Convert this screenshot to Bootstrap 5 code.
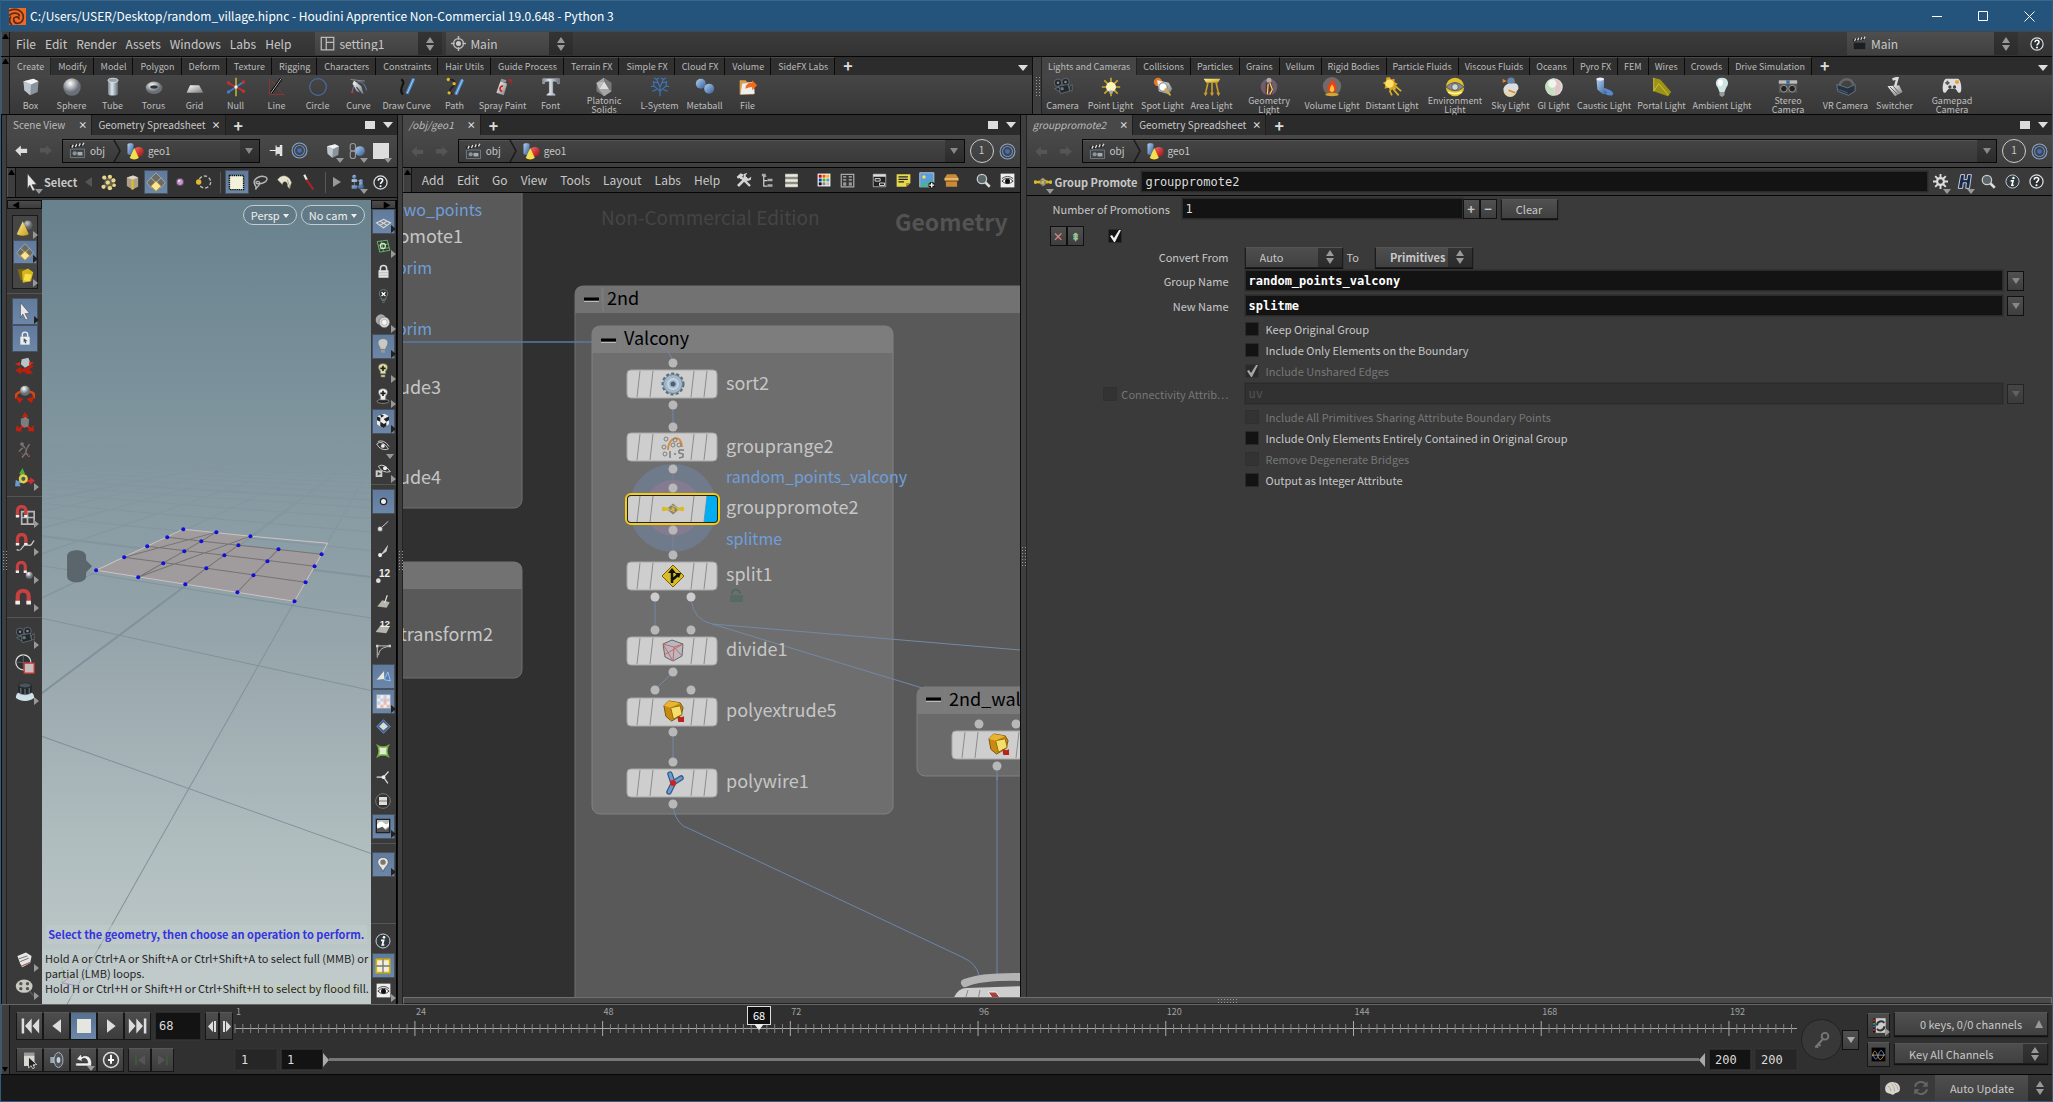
<!DOCTYPE html>
<html lang="en">
<head>
<meta charset="utf-8">
<meta name="viewport" content="width=device-width, initial-scale=1">
<title>random_village.hipnc - Houdini Apprentice</title>
<link rel="stylesheet" href="https://cdn.jsdelivr.net/npm/bootstrap@5.3.0/dist/css/bootstrap.min.css">
<style>
:root{--ui:"Noto Sans CJK SC","Noto Sans",sans-serif;--mono:"DejaVu Sans Mono","Liberation Mono",monospace}
body{background:#3a3a3a;color:#c8c8c8;font:11px/14px var(--ui);border:1px solid #2f5d80;border-top:0}
button,input,select{font:inherit;color:inherit;margin:0}
button{background:none;border:0;padding:0}
a{color:inherit;text-decoration:none}
svg{display:block;flex:none}
.ic{width:20px;height:20px}
.titlebar{height:31px;background:#24547b;border-top:1px solid #3a678a;color:#fff;font-size:12px;padding-left:8px}
.winbtn{width:46px;height:30px;display:grid;place-items:center}
.menubar{height:25px;background:linear-gradient(#3c3c3c,#333);font-size:12px;border-top:1px solid #474747}
.grip{width:9px;flex:none;background:#3e3e3e;border-right:1px solid #111;border-left:1px solid #555}
.grip::before{content:"";display:block;border:3px solid transparent;border-bottom:5px solid #000;border-top:0;margin-top:2px}
.grip.down{display:flex;align-items:end}
.grip.down::before{border-top:5px solid #000;border-bottom:0;margin-bottom:2px}
.menus{gap:9px;padding-left:6px}
.desk{position:relative;height:23px;background:linear-gradient(#4d4d4d,#404040)}
.desk svg{position:absolute;left:5px;top:4px;width:15px;height:15px;pointer-events:none}
.combo{appearance:none;border:0;border-radius:0;width:100%;height:100%;padding:0 26px 0 24px;background:url("data:image/svg+xml,%3Csvg xmlns='http://www.w3.org/2000/svg' width='8' height='14'%3E%3Cpath d='M4 0L8 6H0zM4 14L0 8h8z' fill='%23999'/%3E%3C/svg%3E") right 8px center no-repeat,linear-gradient(#343434,#2b2b2b) right/24px 100% no-repeat,linear-gradient(#4e4e4e,#404040);outline:0}
.btnish{border:1px solid #1c1c1c;border-top-color:#555;box-shadow:0 1px 1px #111}
.shelfrow{height:59px;background:#3a3a3a;border-top:1px solid #050505;border-bottom:1px solid #050505}
.shelftabs{height:18px;background:#2c2c2c;font-size:9px;line-height:17px}
.shelftabs button{padding:0 6px 0 7px;border-right:1px solid #0a0a0a;border-top:1px solid #4a4a4a;background:#303030;color:#bbb;white-space:nowrap}
.tight button{padding:0 6px}
.shelftabs button.on{background:#454545;border-right-color:#222}
.addtab{color:#ddd;font:bold 16px/17px var(--ui)}
.tools{height:39px;background:linear-gradient(#464646,#373737);font-size:9px;line-height:9px}
.tools button{width:41px;flex:none;text-align:center;display:flex;flex-direction:column;align-items:center;color:#bebebe;padding-top:2px}
.tools button span{height:18px;display:grid;place-items:center;white-space:nowrap;margin-top:-1px}
.tools .s45{width:45px}.tools .s49{width:49px}.tools .s55{width:55px}.tools .s60{width:60px}.tools .s66{width:66px}.tools .s73{width:73px}
.tri{border:5px solid transparent;border-top:6px solid #ddd;border-bottom:0;width:0;height:0;flex:none}
.vsash{width:7px;flex:none;background:#3e3e3e;border-left:1px solid #0c0c0c;border-right:1px solid #222;display:grid;place-items:center}
.vsash.slim{width:6px}
.dots{width:5px;height:20px;background:radial-gradient(circle,#999 35%,transparent 45%) 0 0/3px 3px}
.hd{height:20px;background:#2b2b2b;font-size:10px}
.hd .ptab{height:20px;padding:0 4px 0 6px;background:#2f2f2f;border-right:1px solid #1e1e1e;white-space:nowrap}
.hd .ptab.on{background:#484848;color:#bbb}
.ptab button{color:#ddd;font:bold 9px/10px var(--ui);margin-left:6px}
.ptab.on button{margin-left:13px}
.maxi{width:10px;height:8px;background:#ddd}
.pathrow{height:33px;background:linear-gradient(#484848,#3e3e3e);border-bottom:1px solid #050505;padding:0 4px 0 7px;font-size:10px;gap:5px}
.fwd{margin:0 4px}
.pathbox{height:24px;border:1px solid #080808;background:linear-gradient(#444,#3a3a3a);box-shadow:inset 0 1px #555;flex:1;padding-left:6px}
.pathbox .dd{width:19px;height:22px;background:linear-gradient(#383838,#2c2c2c);margin-left:auto;display:grid;place-items:center}
.dd .tri,.field .tri{border-width:4px;border-top:6px solid #888;border-bottom:0}
.num1{width:24px;height:24px;border:1px solid #ccc;border-radius:50%;text-align:center;line-height:20px}
.toolbar{height:30px;background:#333;border-bottom:1px solid #050505}
.toolbar.short{height:25px}
.tb{position:relative;width:24px;height:24px;display:grid;place-items:center;flex:none}
.tb.on{background:linear-gradient(#5f7a9c,#6c87a8);outline:1px solid #47525e;outline-offset:-1px}
.mk::after{content:"";position:absolute;right:-1px;bottom:1px;border:4px solid transparent;border-left:5px solid #999;border-right:0}
.mk.on::after{border-left-color:#222}
.mkd::after{content:"";position:absolute;right:1px;bottom:0;border:4px solid transparent;border-top:5px solid #999;border-bottom:0}
.leftbar{width:35px;flex:none;background:#3a3a3a;padding-bottom:3px}
.leftbar .tb{width:26px;height:28px}
.leftbar .trio{border:1px solid #1a1a1a;background:#464646;margin:6px 0 4px}
.leftbar .trio .tb{width:24px;height:24px}
.leftbar .lk{height:27px}
.rightbar{width:26px;flex:none;background:#3a3a3a;border-right:1px solid #000;padding-bottom:1px}
.rightbar .tb{height:25px;width:23px}
.hr1{height:1px;background:#555;width:100%;flex:none}
.endcap{height:9px;width:100%;background:linear-gradient(#4c4c4c,#3c3c3c);border:1px solid #111;color:#000;font-size:8px;line-height:7px}
.viewrow{padding-top:2px;min-height:0}
.view3d{background:linear-gradient(#67818d,#81969f 30%,#96a5ab 55%,#b0bdbf 80%,#c0cac9);overflow:hidden;position:relative}
.campill{position:absolute;top:5px;height:20px;border:1px solid #c3ccd0;border-radius:10px;background:#627a85;color:#eee;font-size:11px;line-height:16px;padding:0 7px}
.campill .tri{display:inline-block;border-width:3px;border-top:4px solid #eee;border-bottom:0;margin-left:3px;vertical-align:2px}
.hints{position:absolute;left:0;right:0;bottom:6px;color:#262626;font-size:11px;line-height:15px;white-space:nowrap}
.hints b{display:block;margin:0 4px 5px;padding:2px;color:#3434e0;background:#c2cccb80}
.hints p{margin:0;padding:2px 3px;background:#c2cccb80}
.net{background:#303030;overflow:hidden;flex:1;min-height:0;position:relative}
.net text{font-family:var(--ui);font-size:18px}
.netmenu{font-size:12px;gap:13px;padding-left:10px}
.parm{background:#3a3a3a;font-size:11px}
.ophead{height:28px;border-bottom:1px solid #050505}
.inp{background:#131313;border:1px solid #2b2b2b;box-shadow:0 0 0 1px #333;outline:0;height:21px;padding:0 3px;font:12px/18px var(--mono);color:#ddd;border-radius:0;min-width:0}
.inp.dim{background:#262626}
.inp:disabled{background:#313131;color:#555}
.prow{display:flex;align-items:center}
.prow.first{padding:2px 0 0 26px}
.prow.multi{padding-left:23px;margin-top:7px}
.plab{width:202px;text-align:right;flex:none;margin-right:16px}
.off{color:#777}
.cbx{appearance:none;width:14px;height:14px;background:#131313;border:1px solid #2a2a2a;border-radius:0;margin:0 7px 0 0;flex:none}
.cbx:disabled{background:#333;border-color:#303030}
.cbx:checked{background:#131313 url("data:image/svg+xml,%3Csvg xmlns='http://www.w3.org/2000/svg' viewBox='0 0 12 12'%3E%3Cpath d='M1 6l2-1 2 3 5-8 2 0-6 12H5z' fill='%23eee'/%3E%3C/svg%3E") center/12px no-repeat}
.cbx:checked:disabled{background-color:#222;opacity:.6}
.field{height:25px}
.field.conv{height:22px}
.pick{width:98px;height:21px;padding-left:14px}
.ck{height:21px}
.sq{width:17px;height:20px;background:linear-gradient(#505050,#3e3e3e);border:1px solid #111;text-align:center;font:bold 13px/16px var(--ui)}
.sq.mini{font-size:11px;line-height:14px;color:#d88}
.sq.mini.ins{color:#9c9}
.clr{width:57px;height:20px;background:linear-gradient(#505050,#404040)}
.hsash{height:8px;background:#494949;border:1px solid #707070;border-bottom-color:#222}
.hsash .dots{width:20px;height:5px}
.tline{height:71px;background:#303030;border-top:1px solid #666;border-bottom:1px solid #050505;flex:none}
.transport{width:225px;padding:7px 0 0 6px;gap:8px}
.pb{width:27px;height:28px;display:grid;place-items:center;background:linear-gradient(#4d4d4d,#3c3c3c);border:1px solid #161616;border-top-color:#585858}
.pb.on{background:linear-gradient(#56718f,#6c87a8)}
.pb.low{height:24px}
.pb.sm{width:14px}
.pb.jump{width:23px}
.pb.chan{width:23px;height:25px}
.frm{width:46px;height:28px}
.fnum{width:42px;padding-left:5px}
.slit{height:3px;background:#777;flex:1}
.playbar{min-width:0;padding-top:1px}
.ruler text{font:9px var(--ui);fill:#a2a2a2}
.now{position:absolute;top:1px;left:33.55%;margin-left:-12px;width:24px;height:19px;border:1px solid #ddd;background:#111;color:#fff;font:11px/16px var(--ui);text-align:center}
.now::after{content:"";position:absolute;left:6px;top:17px;border:5px solid transparent;border-top:6px solid #eee;border-bottom:0}
.keyc{width:41px;height:41px;border:1px solid #222;border-radius:50%;background:#383838;display:grid;place-items:center}
.chans{width:154px;padding-top:7px;gap:7px}
.status{height:26px;background:#191919;flex:none}
</style>
</head>
<body class="vh-100 d-flex flex-column overflow-hidden m-0">
<svg width="0" height="0" class="position-absolute" aria-hidden="true"><defs>
<linearGradient id="gW" x2="1" y2="1"><stop stop-color="#fff"/><stop offset="1" stop-color="#777"/></linearGradient>
<linearGradient id="gB" x2="1" y2="1"><stop stop-color="#b5d2f2"/><stop offset="1" stop-color="#315c94"/></linearGradient>
<linearGradient id="gR" x2="1" y2="1"><stop stop-color="#f66"/><stop offset="1" stop-color="#9b1212"/></linearGradient>
<linearGradient id="gY" x2="1" y2="1"><stop stop-color="#fff3a0"/><stop offset="1" stop-color="#c79a12"/></linearGradient>
<linearGradient id="gT"><stop stop-color="#78828c"/><stop offset=".4" stop-color="#dfe6ed"/><stop offset="1" stop-color="#5f6a75"/></linearGradient>
<radialGradient id="rW" cx=".4" cy=".3"><stop stop-color="#fff"/><stop offset="1" stop-color="#6a7078"/></radialGradient>
<symbol id="box" viewBox="0 0 24 24"><path d="M3 5l12-3 6 3-1 13-9 4-7-6z" fill="#8a929b"/><path d="M3 5l12-3 6 3-9 4z" fill="#f1f4f7"/><path d="M3 5l9 4-1 13-7-6z" fill="#bcc4cc"/></symbol>
<symbol id="sphere" viewBox="0 0 24 24"><circle cx="12" cy="12" r="10.500" fill="url(#rW)"/></symbol>
<symbol id="tube" viewBox="0 0 24 24"><path d="M6 4v16c0 3 12 3 12 0V4z" fill="url(#gT)"/><ellipse cx="12" cy="4" rx="6" ry="2.500" fill="#99a3ad" stroke="#dfe6ed"/></symbol>
<symbol id="torus" viewBox="0 0 24 24"><ellipse cx="12" cy="13" rx="10" ry="7.500" fill="url(#rW)"/><ellipse cx="12" cy="12" rx="4.500" ry="2" fill="#333"/></symbol>
<symbol id="grid" viewBox="0 0 24 24"><path d="M6 10h11l5 9H2z" fill="url(#gW)"/></symbol>
<symbol id="nul" viewBox="0 0 24 24"><path d="M12 1v22" stroke="#b8b02a" stroke-width="2"/><path d="M2 7l20 10" stroke="#d02c2c" stroke-width="2"/><path d="M3 18L21 6" stroke="#3f7fd0" stroke-width="2"/><circle cx="12" cy="12" r="2" fill="#eee"/><circle cx="3" cy="7" r="2" fill="#d02c2c"/><circle cx="21" cy="17" r="2" fill="#d02c2c"/><circle cx="3" cy="18" r="2" fill="#3f7fd0"/><circle cx="21" cy="6" r="2" fill="#d02c2c"/></symbol>
<symbol id="line" viewBox="0 0 24 24"><path d="M3 2v19h18M5 4l14 16" stroke="#933" fill="none"/><path d="M5 19L17 2" stroke="#000" stroke-width="3"/><path d="M5 19L17 2" stroke="#ddd"/></symbol>
<symbol id="circ" viewBox="0 0 24 24"><circle cx="12" cy="12" r="10" fill="none" stroke="#4b6a9c" stroke-width="1.500"/></symbol>
<symbol id="curve" viewBox="0 0 24 24"><path d="M4 18C6 2 18 2 21 16" stroke="#6b90c8" fill="none"/><path d="M2 3l17 2" stroke="#999"/><path d="M6 4l9 7 3 10-9-4-5-9z" fill="url(#gW)" stroke="#333" stroke-width=".5"/><path d="M9 12l6 8" stroke="#345" stroke-width="1.500"/><circle cx="4" cy="18" r="1.500" fill="#c33"/></symbol>
<symbol id="dcurve" viewBox="0 0 24 24"><path d="M5 3c8 4-5 10 2 18" stroke="#111" stroke-width="2.500" fill="none"/><path d="M20 2l-8 18" stroke="#4a8bd0" stroke-width="4"/><path d="M20 2l-8 18" stroke="#b8d8f5"/></symbol>
<symbol id="path" viewBox="0 0 24 24"><path d="M3 4c9-3 11 4 6 8s-3 8 0 8" stroke="#222" stroke-width="2" fill="none"/><g fill="#e6b91e"><circle cx="4" cy="3" r="2"/><circle cx="11" cy="8" r="2"/><circle cx="5" cy="19" r="2"/></g><path d="M21 3l-8 18" stroke="#4a8bd0" stroke-width="4"/><path d="M21 3l-8 18" stroke="#b8d8f5"/></symbol>
<symbol id="spray" viewBox="0 0 24 24"><path d="M9 5l8 3-4 14-9-3z" fill="url(#gW)"/><path d="M10 2l6 2-1 3-6-2z" fill="#999"/><path d="M17 2l6 1-1 6z" fill="#b22" opacity=".8"/><path d="M12 11c-4-1-5 6-1 6" stroke="#c22" stroke-width="2" fill="none"/></symbol>
<symbol id="font" viewBox="0 0 24 24"><path d="M2 2h20v6h-2c0-3-2-3-6-3v14l3 2v1H7v-1l3-2V5C6 5 4 5 4 8H2z" fill="url(#gT)" stroke="#dde" stroke-width=".5"/></symbol>
<symbol id="plat" viewBox="0 0 24 24"><path d="M12 1l9 6v10l-9 6-9-6V7z" fill="#777"/><path d="M12 5l6 10H6z" fill="#ddd"/><path d="M12 1v4L3 7zM18 15l3 2-9 6-6-8z" fill="#a5a5a5"/><path d="M12 5L3 7l3 8z" fill="#bbb"/></symbol>
<symbol id="lsys" viewBox="0 0 24 24"><path d="M12 23V12M12 17L5 11M12 17l7-6M12 12L8 3M12 12l4-9M5 11H1M5 11L4 5M19 11h4M19 11l1-6M8 3L5 1M8 3l3-2M16 3l-3-2M16 3l3-2M9 7L5 6M15 7l4-1M8 15l-5 2M16 15l5 2" stroke="#3b78c4" stroke-width="1.300" fill="none"/></symbol>
<symbol id="meta" viewBox="0 0 24 24"><circle cx="7" cy="8" r="6" fill="url(#gB)"/><circle cx="17" cy="14" r="6" fill="url(#gB)"/></symbol>
<symbol id="lnk" viewBox="0 0 24 24"><rect x="3" y="2" width="7" height="10" rx="3" fill="none" stroke="#999" stroke-width="1.500"/><rect x="3" y="12" width="7" height="10" rx="3" fill="none" stroke="#999" stroke-width="1.500"/><circle cx="16" cy="12" r="6.500" fill="url(#gB)"/></symbol>
<symbol id="file" viewBox="0 0 24 24"><path d="M2 4h7l2 2h8v15H2z" fill="#d8a04a"/><path d="M5 8l14-2 1 14-17 1z" fill="#eee"/><path d="M9 14c0-6 5-8 8-7V4l6 6-6 6v-4c-3 0-5 1-8 2z" fill="#ee6a1c"/></symbol>
<symbol id="cam" viewBox="0 0 24 24"><g fill="#23282b" stroke="#66727a"><circle cx="6" cy="7" r="4.500"/><circle cx="15" cy="6" r="4.500"/><path d="M6 11l12-2 2 8-11 3z"/><path d="M20 11l3-2v8l-3-1zM2 14l6-2v6z"/></g><circle cx="6" cy="7" r="1.500" fill="#889"/><circle cx="15" cy="6" r="1.500" fill="#889"/><circle cx="11" cy="14" r="2" fill="#667880"/></symbol>
<symbol id="point" viewBox="0 0 24 24"><path d="M12 1v22M1 12h22M4 4l16 16M20 4L4 20" stroke="#c9a52a" stroke-width="2"/><circle cx="12" cy="12" r="6" fill="#fbf4b8"/><path d="M10 16h4v4h-4z" fill="#aaa"/></symbol>
<symbol id="spot" viewBox="0 0 24 24"><circle cx="6" cy="6" r="5" fill="#e07c28"/><path d="M5 4l14 3 4 7-4 7-12-4z" fill="url(#gW)"/><circle cx="12" cy="12" r="5" fill="#fff" stroke="#666"/><path d="M14 14l7 8" stroke="#d8b22c" stroke-width="2"/></symbol>
<symbol id="area" viewBox="0 0 24 24"><path d="M2 2h20l-3 5H5z" fill="url(#gY)"/><path d="M7 7l-3 14M12 7v14M17 7l3 14" stroke="#c9992a" stroke-width="2"/><path d="M2 19h5l-3 4zM9.500 19h5L12 23zM17 19h5l-2 4z" fill="#c9992a"/></symbol>
<symbol id="geol" viewBox="0 0 24 24"><circle cx="12" cy="12" r="10" fill="#c890b8" opacity=".35"/><circle cx="12" cy="4" r="3" fill="#aaa"/><path d="M8 7h7l2 8-2 8h-2v-7l-3 7H8z" fill="#56304c"/><path d="M13 7l3 8-3 6M11 8l-1 13" stroke="#f0d848" stroke-width="1.500" fill="none"/></symbol>
<symbol id="vol" viewBox="0 0 24 24"><circle cx="12" cy="11" r="11" fill="#888" opacity=".6"/><path d="M12 1c2 5 7 8 5 14-1 5-10 5-11 0-1-5 5-7 6-14z" fill="#e2431c"/><path d="M12 9c4 4 3 9 0 9s-4-4 0-9z" fill="#ffc23a"/><ellipse cx="12" cy="21" rx="8" ry="2" fill="#d5a52c"/></symbol>
<symbol id="dist" viewBox="0 0 24 24"><path d="M9 0l2 3 4-1v4l4 2-3 3 1 4-4-1-3 3-2-4-5 1 1-4-3-3 4-2V1z" fill="#e0a320"/><circle cx="9" cy="8" r="5" fill="#fde06a"/><path d="M13 14l7 8M16 11l7 6M9 16l3 6" stroke="#d8b22c" stroke-width="2"/></symbol>
<symbol id="env" viewBox="0 0 24 24"><circle cx="12" cy="12" r="11" fill="#e0c22c"/><path d="M1 12q11-11 22 0q-11 9-22 0z" fill="#888" stroke="#555"/><circle cx="12" cy="12" r="4" fill="#cfd5da" stroke="#555"/><path d="M4 18q8 4 16 0" stroke="#fff6b0" stroke-width="2" fill="none"/></symbol>
<symbol id="sky" viewBox="0 0 24 24"><circle cx="11" cy="16" r="8" fill="#e0d8b0"/><circle cx="12" cy="5" r="4.500" fill="#6786a5"/><path d="M3 14q3-7 10-6 8-2 8 6-3 6-10 5-7 0-8-5z" fill="#ddd"/><path d="M2 2l5 3-5 2z" fill="#e28a24"/><path d="M9 16l8 3" stroke="#d88a24" stroke-width="2"/></symbol>
<symbol id="gi" viewBox="0 0 24 24"><circle cx="12" cy="12" r="10.500" fill="#dcdcdc"/><path d="M12 1.500a10.500 10.500 0 000 21z" fill="#c4dfc0"/><path d="M13 2a10.500 10.500 0 010 20z" fill="#e2c5c5"/><circle cx="10" cy="8" r="5" fill="#fff" opacity=".7"/></symbol>
<symbol id="caus" viewBox="0 0 24 24"><path d="M9 12c6 2 14 4 14 8s-10 3-14-4z" fill="#5a86cc"/><path d="M3 2h9v13l4 4-5 2-7-6z" fill="url(#gB)"/><ellipse cx="7.500" cy="2.500" rx="4.500" ry="2" fill="#eef"/></symbol>
<symbol id="port" viewBox="0 0 24 24"><path d="M2 1l8 2 13 15-4 5L2 17z" fill="#9c9216"/><path d="M2 1v16L8 8l12 14" stroke="#dfc940" fill="none"/></symbol>
<symbol id="amb" viewBox="0 0 24 24"><path d="M12 1c8 0 9 8 5 12l-2 5H9l-2-5C3 9 4 1 12 1z" fill="#cfe3e4"/><path d="M9 18h6v4l-3 2-3-2z" fill="#999"/><ellipse cx="10" cy="7" rx="3" ry="4" fill="#fff"/></symbol>
<symbol id="ster" viewBox="0 0 24 24"><path d="M1 4h22v15H1z" fill="#555"/><path d="M1 4h22v4H1z" fill="#bbb"/><circle cx="7" cy="14" r="4" fill="#222" stroke="#aaa"/><circle cx="17" cy="14" r="4" fill="#222" stroke="#aaa"/><path d="M10 4h4v4h-4z" fill="#336aa8"/></symbol>
<symbol id="vr" viewBox="0 0 24 24"><path d="M4 10C8 0 18 1 21 9" stroke="#666" stroke-width="3" fill="none"/><path d="M1 9l13 4 9-4v8l-8 5L2 17z" fill="#2a333c" stroke="#6d7f90"/><path d="M3 15l11 4" stroke="#3d6ea5"/></symbol>
<symbol id="swi" viewBox="0 0 24 24"><path d="M9 3l6-2-3 11" stroke="#ddd" stroke-width="3" fill="none"/><path d="M3 11l14-1 4 8-9 5z" fill="url(#gW)"/><path d="M6 12l9 9M10 11l7 8" stroke="#555"/></symbol>
<symbol id="pad" viewBox="0 0 24 24"><path d="M5 2h14c4 0 6 17 2 17-3 0-3-5-6-5H9c-3 0-3 5-6 5C-1 19 1 2 5 2z" fill="#ddd"/><path d="M4 7h5M6.500 4.500v5" stroke="#555" stroke-width="2"/><circle cx="9.500" cy="12" r="2" fill="#444"/><circle cx="15" cy="12" r="2" fill="#444"/><circle cx="18" cy="6" r="2.500" fill="#e8a23c"/></symbol>
<symbol id="larr" viewBox="0 0 24 24"><path d="M2 12l9-8v5h10v7H11v5z" fill="currentColor"/></symbol>
<symbol id="clap" viewBox="0 0 24 24"><path d="M2 10h20v12H2z" fill="#3b4246" stroke="#8a9296"/><path d="M1 5l20-4 1 4-20 4z" fill="#222"/><path d="M4 8l2-4M9 7l2-4M14 6l2-4M19 5l2-4" stroke="#ddd" stroke-width="2"/><circle cx="8" cy="16" r="3" fill="#8a9296"/><path d="M12 14h7v5h-7z" fill="#aaa"/></symbol>
<symbol id="clap2" viewBox="0 0 24 24"><path d="M2 10h20v12H2z" fill="#1c1f20" stroke="#555"/><path d="M1 5l20-4 1 4-20 4z" fill="#222"/><path d="M4 8l2-4M9 7l2-4M14 6l2-4M19 5l2-4" stroke="#ddd" stroke-width="2"/></symbol>
<symbol id="geo" viewBox="0 0 24 24"><path d="M2 3v12c0 3 8 3 8 0V3c0-2-8-2-8 0z" fill="url(#gB)"/><circle cx="17" cy="13" r="6.500" fill="url(#gR)"/><path d="M11 8l6 13c-3 3-9 3-12 0z" fill="#f5df4a"/></symbol>
<symbol id="tgt" viewBox="0 0 24 24"><g fill="none" stroke="#6c8dbd" stroke-width="1.500"><circle cx="12" cy="12" r="10.500" stroke="#8aa6cf"/><circle cx="12" cy="12" r="7"/></g><circle cx="12" cy="12" r="3.500" fill="#3b6fc0"/></symbol>
<symbol id="pin" viewBox="0 0 24 24"><path d="M1 12h9M10 5v14M10 8h6V5h2v14h-2v-3h-6z" stroke="#eee" fill="#ddd" stroke-width="1.500"/></symbol>
<symbol id="cur" viewBox="0 0 24 24"><path d="M6 1l12 14-6 .5 4 7-3 1.500-4-8-3 5z" fill="#e8e8e8" stroke="#444" stroke-width=".7"/></symbol>
<symbol id="dots" viewBox="0 0 24 24"><path d="M7 5l12 2 2 10-9 4-6-5z" fill="#66604c"/><g fill="#e8d68a"><circle cx="6" cy="5" r="3"/><circle cx="14" cy="4" r="3"/><circle cx="19" cy="9" r="3"/><circle cx="11" cy="12" r="3"/><circle cx="5" cy="18" r="3"/><circle cx="14" cy="20" r="3"/><circle cx="20" cy="16" r="2.500"/></g></symbol>
<symbol id="ebox" viewBox="0 0 24 24"><path d="M4 5l9-3 7 3v13l-8 4-8-5z" fill="#aaa18a"/><path d="M4 5l9-3 7 3-8 3z" fill="#ddd8c5"/><path d="M12 8v14" stroke="#e5b92c" stroke-width="3"/></symbol>
<symbol id="dia" viewBox="0 0 24 24"><g stroke="#ccc" stroke-width=".7" fill="#6c6c64"><path d="M12 1l6 6-6 6-6-6z"/><path d="M6 7l6 6-6 6-5-6zM18 7l5 6-5 6-6-6z"/></g><path d="M12 11l6 6-6 6-6-6z" fill="#fbe59a" stroke="#c79a12"/></symbol>
<symbol id="vtx" viewBox="0 0 24 24"><circle cx="12" cy="12" r="6" fill="#c39ac8" stroke="#634b68" stroke-width="2"/><circle cx="10.500" cy="10" r="2" fill="#eddcf0"/></symbol>
<symbol id="lasso0" viewBox="0 0 24 24"><circle cx="13" cy="12" r="9" fill="none" stroke="#bbb" stroke-width="2" stroke-dasharray="5 3"/><circle cx="4" cy="12" r="4" fill="#e5b92c"/></symbol>
<symbol id="marq" viewBox="0 0 24 24"><path d="M2 2h20v20H2z" fill="#f2f1da" stroke="#111" stroke-width="2" stroke-dasharray="2 1"/></symbol>
<symbol id="lasso" viewBox="0 0 24 24"><path d="M5 22c2-4 0-5-1-7C0 8 10 1 19 4c7 4-4 12-13 9-2-3 5-4 5 0s-4 4-6 9" fill="none" stroke="#b5b5b5" stroke-width="2"/></symbol>
<symbol id="brush" viewBox="0 0 24 24"><path d="M2 8C7 0 18 0 22 12l-3 9-3-4c1-5-3-8-6-5L9 15z" fill="#e8e4cc" stroke="#555" stroke-width=".6"/><path d="M16 8l4 12" stroke="#887"/></symbol>
<symbol id="laser" viewBox="0 0 24 24"><path d="M6 1l4 8" stroke="#eee" stroke-width="3"/><path d="M9 8l10 14" stroke="#a22" stroke-width="3"/></symbol>
<symbol id="hier" viewBox="0 0 24 24"><path d="M8 5v14M8 10h9M8 19h9" stroke="#999"/><g fill="url(#gB)"><circle cx="8" cy="4" r="3"/><path d="M4 8h8v4H4zM4 17h8v5H4zM14 17h8v5h-8z"/><circle cx="18" cy="11" r="3"/><circle cx="18" cy="15" r="3"/></g></symbol>
<symbol id="help" viewBox="0 0 24 24"><circle cx="12" cy="12" r="10.500" fill="#2b2f31" stroke="#ddd" stroke-width="2"/><path d="M8.500 9c0-5 7-4 7-.5 0 3-3.500 2.500-3.500 6" stroke="#fff" stroke-width="2.500" fill="none"/><circle cx="12" cy="18" r="1.700" fill="#fff"/></symbol>
<symbol id="info" viewBox="0 0 24 24"><circle cx="12" cy="12" r="10.500" fill="#2f3a3e" stroke="#ccd" stroke-width="1.500"/><circle cx="13.500" cy="6.500" r="2" fill="#fff"/><path d="M9 11h4l-2 7h3" stroke="#fff" stroke-width="2.500" fill="none"/></symbol>
<symbol id="wrench" viewBox="0 0 24 24"><path d="M3 21L16 8" stroke="#d4d4d4" stroke-width="4"/><path d="M17 1l-3 5 4 4 5-3-1 5-6 2-5-5 1-6z" fill="#d4d4d4"/><path d="M8 8l13 13" stroke="#d4d4d4" stroke-width="3.500"/><path d="M1 7l6-5 5 2-3 3 1 3-3 1-2-2-2 1z" fill="#d4d4d4"/></symbol>
<symbol id="tree" viewBox="0 0 24 24"><path d="M6 2v19h6M6 12h6M6 5h4" stroke="#ccc" stroke-width="2" fill="none"/><path d="M12 9h8v4h-8zM12 18h8v4h-8zM3 1h6v4H3z" fill="#aaa"/></symbol>
<symbol id="list" viewBox="0 0 24 24"><path d="M2 1h20v22H2z" fill="#8c8c86"/><path d="M2 2h20v4H2zM2 10h20v4H2zM2 18h20v4H2z" fill="#eceade"/></symbol>
<symbol id="pal" viewBox="0 0 24 24"><path d="M1 1h22v22H1z" fill="#f4f4f4"/><path d="M3 3h5v5H3z" fill="#c00"/><path d="M9.500 3h5v5h-5z" fill="#e50"/><path d="M16 3h5v5h-5z" fill="#eb0"/><path d="M3 9.500h5v5H3z" fill="#04a"/><path d="M9.500 9.500h5v5h-5z" fill="#5a2"/><path d="M16 9.500h5v5h-5z" fill="#69a"/><path d="M3 16h5v5H3z" fill="#111"/><path d="M9.500 16h5v5h-5z" fill="#888"/><path d="M16 16h5v5h-5z" fill="#bbb"/></symbol>
<symbol id="gg" viewBox="0 0 24 24"><path d="M2 2h20v20H2z" fill="none" stroke="#aaa" stroke-width="2"/><path d="M5 6h5M14 6h5M5 11h5M14 11h5M5 16h5M14 16h5M5 19h5M14 19h5" stroke="#bbb" stroke-width="2"/></symbol>
<symbol id="nbox" viewBox="0 0 24 24"><path d="M2 2h20v20H2z" fill="#222" stroke="#ddd"/><path d="M2 2h20v4H2z" fill="#ddd"/><path d="M5 9h8v4H5zM12 16h8v4h-8z" fill="none" stroke="#ddd" stroke-width="1.500"/></symbol>
<symbol id="note" viewBox="0 0 24 24"><path d="M1 2h22v14l-7 6H1z" fill="#e8d850"/><path d="M23 16h-7v6z" fill="#a8962c"/><path d="M4 6h15M4 10h15M4 14h9" stroke="#222" stroke-width="2"/></symbol>
<symbol id="img" viewBox="0 0 24 24"><path d="M1 1h20v20H1z" fill="#5d9be0" stroke="#ddd"/><circle cx="7" cy="7" r="2.500" fill="#f0df50"/><path d="M2 18l6-6 4 4 5-6 4 5v6H2z" fill="#4cb09a"/><path d="M18 14v9M13.500 18.500h9" stroke="#111" stroke-width="5"/><path d="M18 15v7M14.500 18.500h7" stroke="#fff" stroke-width="2"/></symbol>
<symbol id="crate" viewBox="0 0 24 24"><path d="M5 2h14l4 6v4h-2v10H3V12H1V8z" fill="#c98a3a"/><path d="M1 8h22v4H1z" fill="#e8b46a"/><path d="M3 12h18v2H3z" fill="#8a5a1e"/></symbol>
<symbol id="mag" viewBox="0 0 24 24"><path d="M14 14l8 8" stroke="#ddd" stroke-width="4"/><circle cx="9.500" cy="9.500" r="7.500" fill="#5a656a" stroke="#ccc" stroke-width="2"/></symbol>
<symbol id="eye" viewBox="0 0 24 24"><path d="M1 1h22v22H1z" fill="#eee"/><path d="M3 13q9-9 18 0q-9 8-18 0z" fill="#fff" stroke="#333" stroke-width="1.500"/><circle cx="12" cy="13" r="4" fill="#111"/><path d="M3 9q9-7 18 0" stroke="#444" stroke-width="1.500" fill="none"/></symbol>
<symbol id="gear" viewBox="0 0 24 24"><circle cx="12" cy="12" r="5.500" fill="none" stroke="#ddd" stroke-width="3.500"/><path d="M12 0v6M12 18v6M0 12h6M18 12h6M3.500 3.500L8 8M16 16l4.500 4.500M20.500 3.500L16 8M8 16l-4.500 4.500" stroke="#ddd" stroke-width="3"/></symbol>
<symbol id="hh" viewBox="0 0 24 24"><path d="M6 1h6l-1 8h5l1-8h6l-3 22h-6l1-9h-5l-1 9H2z" fill="#16284a" stroke="#cdd6e8" stroke-width="1.500"/></symbol>
<symbol id="promo" viewBox="0 0 24 24"><path d="M0 12h24" stroke="#b9a01c" stroke-width="2.500"/><path d="M12 6l7 6-7 6-7-6z" fill="#8d866c"/><path d="M6 12l8 3M10 8l8 3" stroke="#cbbf8a"/><g fill="#d9bb26"><circle cx="2" cy="12" r="2.500"/><circle cx="6" cy="12" r="2"/><circle cx="18" cy="12" r="2"/><circle cx="22" cy="12" r="2.500"/><circle cx="12" cy="12" r="1.800"/></g></symbol>
<symbol id="cone" viewBox="0 0 24 24"><circle cx="16" cy="8" r="6" fill="url(#rW)" opacity=".7"/><path d="M9 3l8 17c-3 3-13 3-16 0z" fill="url(#gY)"/></symbol>
<symbol id="ycube" viewBox="0 0 24 24"><path d="M2 3l12 0 2 16-10-2z" fill="#7d6c10"/><path d="M8 6l8-4 7 5-3 12-11 2z" fill="#d5b61c"/><path d="M12 9l9 1-3 9-8-1z" fill="#f5df4a"/></symbol>
<symbol id="lock" viewBox="0 0 24 24"><path d="M7 11V7c0-6 10-6 10 0v4" fill="none" stroke="#ddd" stroke-width="2.500"/><path d="M4 10h16v12H4z" fill="#e4e4e0"/><path d="M4 14h16M4 18h16" stroke="#aaa"/></symbol>
<symbol id="lockc" viewBox="0 0 24 24"><path d="M8 10V7c0-5 8-5 8 0v3" fill="none" stroke="#eee" stroke-width="2"/><path d="M5 10h14v12H5z" fill="#eee"/><path d="M10 12l6 5-3 0 1 3-2 0-1-3-1 2z" fill="#456"/></symbol>
<symbol id="mov" viewBox="0 0 24 24"><path d="M0 17l7-4 1 3 8-3 1-3 6 2-6 4 5 5-9 1 1-2-6-1-1 3z" fill="#b8200e"/><path d="M8 4l8-2 3 8-7 4-5-4z" fill="#b9c4ca"/><path d="M0 10l6-3v5zM23 8l-6-1v4z" fill="#d32a12"/></symbol>
<symbol id="rot" viewBox="0 0 24 24"><path d="M2 17c-3-5 3-8 6-7M22 17c3-6-3-8-5-7" stroke="#d8480e" stroke-width="3" fill="none"/><path d="M1 15l9 3-5 5zM23 15l-9 3 6 5z" fill="#c81e0a"/><circle cx="12" cy="8" r="6" fill="url(#rW)"/></symbol>
<symbol id="scl" viewBox="0 0 24 24"><path d="M12 0l4 6h-3v4h-2V6H8zM1 23l1-7 3 3 4-4 2 2-4 4 2 2zM23 23l-1-7-3 3-4-4-2 2 4 4-2 2z" fill="#c4200e"/><path d="M7 8l6-2 4 3-1 8-5 2-4-4z" fill="#9eacb3" opacity=".6"/></symbol>
<symbol id="pose" viewBox="0 0 24 24"><g stroke="#777" stroke-width="2" fill="none"><path d="M9 6l5 5-1 5-5 6M14 11l4-7M13 16l5 5M9 9l-5 5"/></g><circle cx="8" cy="4" r="2.500" fill="#777"/><path d="M12 9h3M7 17h3M16 19h3" stroke="#833" stroke-width="2"/></symbol>
<symbol id="hand" viewBox="0 0 24 24"><path d="M5 7l4-7 3 7-2 1v4H7V8z" fill="#4cae3a"/><path d="M24 15l-6-4v3h-4v3h4v3z" fill="#c9303a"/><path d="M0 22l1-8 3 2 3-2 2 3-4 2 2 3z" fill="#6a9ad0"/><circle cx="10" cy="13" r="5.500" fill="#e5cf3a"/><circle cx="10" cy="13" r="2.500" fill="#3a5a7a"/></symbol>
<symbol id="magn" viewBox="0 0 24 24"><path d="M4 16V9c0-8 12-8 12 0v7" fill="none" stroke="#c84040" stroke-width="4.500"/><path d="M1.500 14h5v4h-5zM13.500 14h5v4h-5z" fill="#eee"/></symbol>
<symbol id="mgrid" viewBox="0 0 24 24"><path d="M8 8h15v15H8zM8 15h15M15 8v15" fill="none" stroke="#b5b5b5" stroke-width="2"/><path d="M3 14V7c0-7 10-7 10 0v7" fill="none" stroke="#c84040" stroke-width="4"/><path d="M1 12h4v3H1zM11 12h4v3h-4z" fill="#eee"/></symbol>
<symbol id="mcurv" viewBox="0 0 24 24"><path d="M2 20c8 4 6-8 12-6 6 3 6-2 9-5" fill="none" stroke="#ccc" stroke-width="1.500"/><path d="M3 14V7c0-7 10-7 10 0v7" fill="none" stroke="#c84040" stroke-width="4"/><path d="M1 12h4v3H1zM11 12h4v3h-4z" fill="#eee"/></symbol>
<symbol id="mpt" viewBox="0 0 24 24"><path d="M3 14V7c0-7 10-7 10 0v7" fill="none" stroke="#c84040" stroke-width="4"/><path d="M1 12h4v3H1zM11 12h4v3h-4z" fill="#eee"/><circle cx="18" cy="18" r="4.500" fill="url(#rW)"/></symbol>
<symbol id="rend" viewBox="0 0 24 24"><circle cx="10" cy="10" r="9" fill="#2a3033" stroke="#ddd" stroke-width="1.500"/><path d="M1 10h18M10 1v18" stroke="#666"/><path d="M11 11h12v12H11z" fill="#c9bcbc" stroke="#c33" stroke-width="1.500"/></symbol>
<symbol id="jar" viewBox="0 0 24 24"><path d="M1 19c0-6 4-8 11-8s11 2 11 8c-4 5-18 5-22 0z" fill="#cfe0e6"/><path d="M4 4c0-4 16-4 16 0v9c-4 3-12 3-16 0z" fill="#20262a"/><path d="M7 7v8M12 8v8M17 7v8" stroke="#89939a"/><ellipse cx="12" cy="4" rx="7" ry="2.500" fill="#4a555b"/></symbol>
<symbol id="slate" viewBox="0 0 24 24"><path d="M2 7l12-5 8 5-2 10-11 6-3-5z" fill="#e6e6e6"/><path d="M4 11l12-4M6 15l12-5M8 21l12-5" stroke="#444"/><path d="M7 22l13-6" stroke="#c53"/></symbol>
<symbol id="reel" viewBox="0 0 24 24"><ellipse cx="11" cy="11" rx="10" ry="8" fill="#c9c9c3"/><g fill="#55554f"><circle cx="7" cy="8" r="2"/><circle cx="15" cy="8" r="2"/><circle cx="7" cy="14" r="2"/><circle cx="15" cy="14" r="2"/></g><path d="M17 17l6 6" stroke="#555" stroke-width="2"/></symbol>
<symbol id="pgrid" viewBox="0 0 24 24"><path d="M2 14l10-5 10 5-10 7zM7 11.500l10 6M17 11.500l-10 6" fill="#7e8a94" stroke="#ddd" stroke-width="1.500"/></symbol>
<symbol id="green" viewBox="0 0 24 24"><path d="M2 4l16-2 4 16-16 3zM4 10l16-2M5 16l16-2M8 3l4 17" fill="#2c3a2c" stroke="#6ab86a" stroke-width="1.500"/><circle cx="11" cy="11" r="4" fill="none" stroke="#ddd" stroke-width="2"/></symbol>
<symbol id="nobulb" viewBox="0 0 24 24"><path d="M12 2c8 0 8 8 4 12v3H8v-3C4 10 4 2 12 2zM9 19h6M10 22h4" fill="#2b3438" stroke="#999"/><path d="M9 6l6 6M15 6l-6 6" stroke="#fff" stroke-width="2"/></symbol>
<symbol id="discs" viewBox="0 0 24 24"><circle cx="9" cy="10" r="8" fill="#aaa"/><circle cx="14" cy="14" r="8" fill="#ddd" stroke="#666"/><circle cx="14" cy="14" r="4.500" fill="#f5f5f0" stroke="#999"/></symbol>
<symbol id="bulb" viewBox="0 0 24 24"><path d="M12 1c8 0 9 7 5 12l-1 4H8l-1-4C3 8 4 1 12 1z" fill="#c8c8c4" stroke="#777"/><path d="M9 18h6v4H9z" fill="#999"/></symbol>
<symbol id="bulbp" viewBox="0 0 24 24"><path d="M12 1c8 0 8 7 4 11v4H8v-4C4 8 4 1 12 1zM9 18h6v3H9z" fill="#dfdf9a" stroke="#777"/><path d="M12 4v8M8 8h8" stroke="#222" stroke-width="2.500"/></symbol>
<symbol id="bulbf" viewBox="0 0 24 24"><ellipse cx="12" cy="20" rx="9" ry="3" fill="#222" stroke="#aaa"/><path d="M12 1c8 0 8 7 4 11v6H8v-6C4 8 4 1 12 1z" fill="#eee" stroke="#777"/><path d="M12 4v8M8 8h8" stroke="#222" stroke-width="2.500"/></symbol>
<symbol id="chk" viewBox="0 0 24 24"><path d="M3 5l11-4 7 4v12l-9 6-9-6z" fill="#eee"/><path d="M3 5l5 2v6l-5-2zM8 13l5 3v7l-5-3zM13 9l8-4v6l-4 2zM8 2l6 2-5 3zM13 17l4-3v6l-4 2z" fill="#222"/></symbol>
<symbol id="ey2" viewBox="0 0 24 24"><path d="M1 8q8-8 19 8q-12 4-19-8zM3 4q10-4 18 8" fill="#333" stroke="#ccc" stroke-width="1.500"/><circle cx="11" cy="11" r="3" fill="#eee"/></symbol>
<symbol id="ey3" viewBox="0 0 24 24"><path d="M5 5q8-6 18 8q-12 3-18-8z" fill="#333" stroke="#ccc" stroke-width="1.500"/><circle cx="15" cy="8" r="3" fill="#eee"/><path d="M1 11h10v10H1z" fill="#ccc"/><path d="M4 13l5 3-5 3z" fill="#444"/></symbol>
<symbol id="pt" viewBox="0 0 24 24"><circle cx="12" cy="12" r="5" fill="#eee" stroke="#222" stroke-width="2"/></symbol>
<symbol id="pt1" viewBox="0 0 24 24"><path d="M8 16L21 4" stroke="#ddd" stroke-width="1.500"/><circle cx="7" cy="17" r="4.500" fill="#ddd" stroke="#222"/></symbol>
<symbol id="pt2" viewBox="0 0 24 24"><path d="M7 20L21 1l-3 12z" fill="#ccc"/><circle cx="7" cy="19" r="3.500" fill="#eee"/></symbol>
<symbol id="n12" viewBox="0 0 24 24"><circle cx="5" cy="19" r="3.500" fill="#ddd"/><text x="6" y="14" font-size="15" font-weight="bold" fill="#eee" font-family="Liberation Sans,sans-serif">12</text></symbol>
<symbol id="nrm" viewBox="0 0 24 24"><path d="M2 20l8-10 12 3-5 9z" fill="#b5b5ad"/><path d="M14 14l4-12" stroke="#ddd" stroke-width="2"/></symbol>
<symbol id="p12" viewBox="0 0 24 24"><path d="M1 21l8-11 13 3-5 10z" fill="#b5b5ad"/><text x="7" y="13" font-size="14" font-weight="bold" fill="#eee" font-family="Liberation Sans,sans-serif">12</text></symbol>
<symbol id="bez" viewBox="0 0 24 24"><path d="M2 22V3h20M4 18C5 8 12 5 20 4" fill="none" stroke="#c8c8c8" stroke-width="1.500"/><path d="M0 1h4v4H0zM20 1h4v4h-4z" fill="#ccc"/></symbol>
<symbol id="shade" viewBox="0 0 24 24"><path d="M1 17L13 3l0 13z" fill="#e8e8e0"/><path d="M13 17L19 5l4 14-10-2z" fill="#4b80c8" stroke="#cfe0f5"/></symbol>
<symbol id="uvc" viewBox="0 0 24 24"><path d="M1 1h22v22H1z" fill="#eee" stroke="#999"/><path d="M2 2h5v5H2zM12 2h5v5h-5zM7 7h5v5H7zM17 7h5v5h-5zM2 12h5v5H2z" fill="#c2cfe8"/><path d="M12 12h5v5h-5zM7 17h5v5H7zM17 17h5v5h-5zM12 7h5v5h-5z" fill="#e8b8b4"/></symbol>
<symbol id="bdia" viewBox="0 0 24 24"><path d="M12 1l11 11-11 11L1 12z" fill="#41658f" stroke="#7fa0c8"/><path d="M12 5l7 7-7 6-7-6z" fill="#dcdcd4"/></symbol>
<symbol id="grn" viewBox="0 0 24 24"><path d="M3 3c5 3 13 3 18 0-3 6-3 12 0 18-5-3-13-3-18 0 3-6 3-12 0-18z" fill="#e3e8d8" stroke="#6fae3a" stroke-width="2.500"/></symbol>
<symbol id="yax" viewBox="0 0 24 24"><path d="M1 13l11 0 8-9M12 13l7 10" stroke="#ddd" stroke-width="2" fill="none"/><circle cx="12" cy="13" r="3" fill="#eee"/></symbol>
<symbol id="eq" viewBox="0 0 24 24"><circle cx="12" cy="12" r="11" fill="#333" stroke="#777" stroke-width="1.500"/><path d="M6 6h12v12H6z" fill="#e0e0da"/><path d="M6 12h12" stroke="#777" stroke-width="1.500"/></symbol>
<symbol id="bg" viewBox="0 0 24 24"><path d="M2 2h20v20H2z" fill="#bbb" stroke="#222" stroke-width="2"/><path d="M3 10q5-8 10-3t8-1v6l-6 4-4-3-4 3-4-2z" fill="#fff"/><path d="M3 21l0-5 8-3 5 5 5-4v7z" fill="#555"/></symbol>
<symbol id="pinm" viewBox="0 0 24 24"><path d="M12 23C10 16 4 13 4 8.500 4-1 20-1 20 8.500 20 13 14 16 12 23z" fill="#e4e4e0" stroke="#555"/><circle cx="12" cy="8.500" r="4" fill="#777"/></symbol>
<symbol id="quad" viewBox="0 0 24 24"><path d="M2 2h20v20H2z" fill="#f2f0dc" stroke="#d8b400" stroke-width="2.500"/><path d="M12 2v20M2 12h20" stroke="#777" stroke-width="2"/></symbol>
<symbol id="first" viewBox="0 0 24 24"><path d="M2 3h3v18H2zM14 3v18L6 12zM23 3v18l-8-9z" fill="#ddd"/></symbol>
<symbol id="prev" viewBox="0 0 24 24"><path d="M18 2v20L5 12z" fill="#ddd"/></symbol>
<symbol id="clock" viewBox="0 0 24 24"><circle cx="12" cy="12" r="10" fill="#444" stroke="#ddd" stroke-width="2"/><path d="M12 5v12M8 12h8" stroke="#fff" stroke-width="2.500" fill="none"/></symbol>
<symbol id="undo" viewBox="0 0 24 24"><path d="M1 20h21c2-14-9-16-13-12L8 4 2 11l8 3-1-3c4-3 8 0 8 5H1z" fill="#eee" stroke="#222" stroke-width=".7"/></symbol>
<symbol id="spk" viewBox="0 0 24 24"><path d="M3 8h5l7-6v20l-7-6H3z" fill="#9aa7ae"/><ellipse cx="14" cy="12" rx="6" ry="10" fill="#4c565c" stroke="#ccd"/><ellipse cx="14" cy="12" rx="2.500" ry="4" fill="#ccd"/></symbol>
<symbol id="sel2" viewBox="0 0 24 24"><path d="M4 2h14v4H4z" fill="#999"/><path d="M4 6h14v14H4z" fill="#d8d8d2"/><path d="M10 8l11 10-5 .5 2 4-2.500 1-2-4-3.500 3z" fill="#222" stroke="#eee"/></symbol>
<symbol id="keyi" viewBox="0 0 24 24"><circle cx="16" cy="7" r="4.500" fill="none" stroke="#777" stroke-width="2.500"/><path d="M13 11L3 22M7 17l3 3M4 20l3 2" stroke="#777" stroke-width="2.500"/></symbol>
<symbol id="kref" viewBox="0 0 24 24"><path d="M2 1h20v22H2z" fill="#ccc"/><path d="M2 1h5v22H2z" fill="#111"/><path d="M3 3h3v3H3zM3 17h3v3H3z" fill="#c22"/><path d="M3 8h3v3H3z" fill="#2a4"/><path d="M3 12h3v3H3z" fill="#26c"/><path d="M9 12c0-7 8-8 11-4M20 13c0 7-8 8-11 4" fill="none" stroke="#333" stroke-width="3"/></symbol>
<symbol id="wave" viewBox="0 0 24 24"><path d="M1 1h22v22H1z" fill="#000"/><path d="M2 13h20" stroke="#ddd"/><path d="M2 15c4-14 6-8 9 0s6 6 10-3" stroke="#d98a2c" stroke-width="1.500" fill="none"/><path d="M3 11c4 12 6 10 9 1s6-8 9 1" stroke="#5b93d8" stroke-width="1.500" fill="none"/></symbol>
<symbol id="brain" viewBox="0 0 24 24"><path d="M2 15C0 6 8 2 13 3c8 0 11 7 9 12-3 4-6 2-8 5-3 2-4-1-7-1-3-1-4-2-5-4z" fill="#d8d6cc"/><path d="M5 8q5 2 5 8M10 5q5 3 5 11M15 5q4 3 5 9" stroke="#99958a" fill="none"/></symbol>
<symbol id="ref" viewBox="0 0 24 24"><path d="M3 10c2-8 12-9 16-4M21 14c-2 8-12 9-16 4" stroke="#666" stroke-width="3" fill="none"/><path d="M22 2v8h-8zM2 22v-8h8z" fill="#666"/></symbol>
<symbol id="cross" viewBox="0 0 24 24"><circle cx="12" cy="12" r="8" fill="none" stroke="#bbb" stroke-width="2"/><path d="M12 0v6M12 18v6M0 12h6M18 12h6" stroke="#bbb" stroke-width="2.500"/><circle cx="12" cy="12" r="4" fill="#ccc"/></symbol>
<symbol id="lay" viewBox="0 0 24 24"><path d="M2 2h20v20H2zM10 2v20M10 10h12" fill="none" stroke="#bbb" stroke-width="2"/></symbol>
<symbol id="poly" viewBox="0 0 24 24"><path d="M2 6l5-5 12 2 3 5-2 8-10 6-6-5z" fill="#c98a14" stroke="#7a5208"/><path d="M9 8l10-2 2 9-9 5z" fill="#f5df6a" stroke="#8a6a10"/><path d="M2 6l5-5 12 2-10 5z" fill="#eab42c"/><path d="M16 17l4 1 3-1 0 6-6 0z" fill="#b82418"/></symbol>
</defs></svg>

<header class="titlebar d-flex align-items-center flex-shrink-0">
  <svg width="17" height="17" viewBox="0 0 18 18"><path d="M0 0h18v18H0z" fill="#f26a21"/><path d="M0 3c9-4 16 1 15 8-1 6-9 7-10 2-1-4 5-5 6-1M0 8c4-4 11-3 11 1M3 18c-3-3-3-6-1-9" fill="none" stroke="#5a2a18" stroke-width="1.800"/></svg>
  <span class="ms-1">C:/Users/USER/Desktop/random_village.hipnc - Houdini Apprentice Non-Commercial 19.0.648 - Python 3</span>
  <div class="ms-auto d-flex">
    <button class="winbtn" aria-label="Minimize"><svg width="10" height="10"><path d="M0 5.500h10" stroke="#fff"/></svg></button>
    <button class="winbtn" aria-label="Maximize"><svg width="11" height="11"><path d="M.5.5h9v9h-9z" stroke="#fff" fill="none"/></svg></button>
    <button class="winbtn" aria-label="Close"><svg width="11" height="11"><path d="M.5.5l10 10M10.500.5l-10 10" stroke="#fff"/></svg></button>
  </div>
</header>

<nav class="menubar d-flex flex-shrink-0">
  <div class="grip"></div>
  <div class="menus d-flex align-items-center"><a href="#">File</a><a href="#">Edit</a><a href="#">Render</a><a href="#">Assets</a><a href="#">Windows</a><a href="#">Labs</a><a href="#">Help</a></div>
  <div class="desk ms-4" style="width:127px"><select class="combo" aria-label="Desktop"><option>setting1</option></select><svg><use href="#lay"/></svg></div>
  <div class="desk ms-1" style="width:127px"><select class="combo" aria-label="Radial menu"><option>Main</option></select><svg><use href="#cross"/></svg></div>
  <div class="desk ms-auto" style="width:171px"><select class="combo" aria-label="Take"><option>Main</option></select><svg><use href="#clap2"/></svg></div>
  <button class="ms-2 me-1 px-1" aria-label="Help"><svg width="14" height="14"><use href="#help"/></svg></button>
</nav>

<section class="shelfrow d-flex flex-shrink-0">
  <div class="grip"></div>
  <div style="width:1022px" class="flex-shrink-0">
    <div class="shelftabs d-flex"><button class="on">Create</button><button>Modify</button><button>Model</button><button>Polygon</button><button>Deform</button><button>Texture</button><button>Rigging</button><button>Characters</button><button>Constraints</button><button>Hair Utils</button><button>Guide Process</button><button>Terrain FX</button><button>Simple FX</button><button>Cloud FX</button><button>Volume</button><button>SideFX Labs</button><span class="addtab ms-2">+</span><i class="tri ms-auto me-1 mt-2"></i></div>
    <div class="tools d-flex">
      <button><svg class="ic"><use href="#box"/></svg><span>Box</span></button><button><svg class="ic"><use href="#sphere"/></svg><span>Sphere</span></button><button><svg class="ic"><use href="#tube"/></svg><span>Tube</span></button><button><svg class="ic"><use href="#torus"/></svg><span>Torus</span></button><button><svg class="ic"><use href="#grid"/></svg><span>Grid</span></button><button><svg class="ic"><use href="#nul"/></svg><span>Null</span></button><button><svg class="ic"><use href="#line"/></svg><span>Line</span></button><button><svg class="ic"><use href="#circ"/></svg><span>Circle</span></button><button><svg class="ic"><use href="#curve"/></svg><span>Curve</span></button><button class="s55"><svg class="ic"><use href="#dcurve"/></svg><span>Draw Curve</span></button><button><svg class="ic"><use href="#path"/></svg><span>Path</span></button><button class="s55"><svg class="ic"><use href="#spray"/></svg><span>Spray Paint</span></button><button><svg class="ic"><use href="#font"/></svg><span>Font</span></button><button class="s66"><svg class="ic"><use href="#plat"/></svg><span>Platonic<br>Solids</span></button><button class="s45"><svg class="ic"><use href="#lsys"/></svg><span>L-System</span></button><button class="s45"><svg class="ic"><use href="#meta"/></svg><span>Metaball</span></button><button><svg class="ic"><use href="#file"/></svg><span>File</span></button>
    </div>
  </div>
  <div class="vsash" style="width:10px"><div class="dots"></div></div>
  <div class="flex-fill">
    <div class="shelftabs tight d-flex"><button class="on">Lights and Cameras</button><button>Collisions</button><button>Particles</button><button>Grains</button><button>Vellum</button><button>Rigid Bodies</button><button>Particle Fluids</button><button>Viscous Fluids</button><button>Oceans</button><button>Pyro FX</button><button>FEM</button><button>Wires</button><button>Crowds</button><button>Drive Simulation</button><span class="addtab ms-2">+</span><i class="tri ms-auto me-1 mt-2"></i></div>
    <div class="tools d-flex">
      <button><svg class="ic"><use href="#cam"/></svg><span>Camera</span></button><button class="s55"><svg class="ic"><use href="#point"/></svg><span>Point Light</span></button><button class="s49"><svg class="ic"><use href="#spot"/></svg><span>Spot Light</span></button><button class="s49"><svg class="ic"><use href="#area"/></svg><span>Area Light</span></button><button class="s66"><svg class="ic"><use href="#geol"/></svg><span>Geometry<br>Light</span></button><button class="s60"><svg class="ic"><use href="#vol"/></svg><span>Volume Light</span></button><button class="s60"><svg class="ic"><use href="#dist"/></svg><span>Distant Light</span></button><button class="s66"><svg class="ic"><use href="#env"/></svg><span>Environment<br>Light</span></button><button class="s45"><svg class="ic"><use href="#sky"/></svg><span>Sky Light</span></button><button><svg class="ic"><use href="#gi"/></svg><span>GI Light</span></button><button class="s60"><svg class="ic"><use href="#caus"/></svg><span>Caustic Light</span></button><button class="s55"><svg class="ic"><use href="#port"/></svg><span>Portal Light</span></button><button class="s66"><svg class="ic"><use href="#amb"/></svg><span>Ambient Light</span></button><button class="s66"><svg class="ic"><use href="#ster"/></svg><span>Stereo<br>Camera</span></button><button class="s49"><svg class="ic"><use href="#vr"/></svg><span>VR Camera</span></button><button class="s49"><svg class="ic"><use href="#swi"/></svg><span>Switcher</span></button><button class="s66"><svg class="ic"><use href="#pad"/></svg><span>Gamepad<br>Camera</span></button>
    </div>
  </div>
</section>

<main class="d-flex flex-fill" style="min-height:0">
  <div class="vsash slim"><div class="dots"></div></div>
  <section class="d-flex flex-column flex-shrink-0" style="width:19%">
    <div class="hd d-flex align-items-center">
      <div class="ptab on d-flex align-items-center">Scene View<button aria-label="Close tab">×</button></div><div class="ptab d-flex align-items-center">Geometry Spreadsheet<button aria-label="Close tab">×</button></div><span class="addtab ms-2">+</span><i class="maxi ms-auto me-2"></i><i class="tri me-1"></i>
    </div>
    <div class="pathrow d-flex align-items-center">
      <svg width="15" height="15" color="#ddd"><use href="#larr"/></svg><svg class="fwd" width="15" height="15" color="#555" transform="rotate(180)"><use href="#larr"/></svg>
      <div class="pathbox d-flex align-items-center"><svg width="17" height="17"><use href="#clap"/></svg><span class="mx-1">obj</span><svg width="9" height="22" class="mx-1"><path d="M1 0l6 11-6 11" stroke="#1a1a1a" fill="none" stroke-width="1.500"/></svg><svg width="18" height="18"><use href="#geo"/></svg><span class="mx-1">geo1</span><div class="dd"><i class="tri"></i></div></div>
      <svg width="17" height="17" class="ms-1"><use href="#pin"/></svg><svg width="17" height="17"><use href="#tgt"/></svg>
      <div class="d-flex ms-2"><button class="tb mkd"><svg width="16" height="18"><use href="#box"/></svg></button><button class="tb mkd"><svg width="18" height="18"><use href="#lnk"/></svg></button><button class="tb mkd"><svg width="16" height="16"><path d="M0 0h16v16H0z" fill="#ddd"/></svg></button></div>
    </div>
    <div class="toolbar d-flex align-items-center"><div class="grip h-100"></div>
      <button class="tb mkd ms-1"><svg width="18" height="20"><use href="#cur"/></svg></button><b class="me-2">Select</b>
      <svg width="7" height="10" class="me-1"><path d="M7 0v10L0 5z" fill="#555"/></svg>
      <button class="tb"><svg width="17" height="17"><use href="#dots"/></svg></button><button class="tb"><svg width="17" height="17"><use href="#ebox"/></svg></button><button class="tb on"><svg width="20" height="20"><use href="#dia"/></svg></button><button class="tb"><svg width="14" height="14"><use href="#vtx"/></svg></button><button class="tb"><svg width="16" height="16"><use href="#lasso0"/></svg></button>
      <div class="vr mx-1 my-1"></div>
      <button class="tb on"><svg width="17" height="17"><use href="#marq"/></svg></button><button class="tb"><svg width="17" height="17"><use href="#lasso"/></svg></button><button class="tb"><svg width="17" height="17"><use href="#brush"/></svg></button><button class="tb"><svg width="17" height="17"><use href="#laser"/></svg></button>
      <div class="vr mx-1 my-1"></div><svg width="8" height="10" class="mx-1"><path d="M0 0v10l8-5z" fill="#999"/></svg>
      <button class="tb mkd"><svg width="16" height="16"><use href="#hier"/></svg></button><button class="tb ms-auto me-1"><svg width="15" height="15"><use href="#help"/></svg></button>
    </div>
    <div class="viewrow d-flex flex-fill">
      <div class="leftbar d-flex flex-column align-items-center">
        <div class="endcap ps-1">◀</div>
        <div class="trio"><button class="tb mk"><svg width="18" height="18"><use href="#cone"/></svg></button><button class="tb on mk"><svg width="18" height="18"><use href="#dia"/></svg></button><button class="tb mk"><svg width="18" height="18"><use href="#ycube"/></svg></button></div>
        <div class="hr1 mb-1"></div>
        <button class="tb on mk lk"><svg width="18" height="20"><use href="#cur"/></svg></button><button class="tb on lk"><svg width="16" height="16"><use href="#lockc"/></svg></button>
        <button class="tb"><svg width="20" height="20"><use href="#mov"/></svg></button><button class="tb"><svg width="20" height="20"><use href="#rot"/></svg></button><button class="tb"><svg width="20" height="20"><use href="#scl"/></svg></button><button class="tb"><svg width="18" height="18"><use href="#pose"/></svg></button><button class="tb mk"><svg width="20" height="20"><use href="#hand"/></svg></button>
        <div class="hr1 my-1"></div>
        <button class="tb mk"><svg width="20" height="20"><use href="#mgrid"/></svg></button><button class="tb mk"><svg width="20" height="20"><use href="#mcurv"/></svg></button><button class="tb mk"><svg width="19" height="19"><use href="#mpt"/></svg></button><button class="tb mk"><svg width="22" height="22"><use href="#magn"/></svg></button>
        <div class="hr1 my-1"></div>
        <button class="tb mk"><svg width="20" height="20"><use href="#cam"/></svg></button><button class="tb"><svg width="20" height="20"><use href="#rend"/></svg></button><button class="tb mk"><svg width="20" height="20"><use href="#jar"/></svg></button>
        <button class="tb mk mt-auto"><svg width="17" height="17"><use href="#slate"/></svg></button><button class="tb mk"><svg width="20" height="20"><use href="#reel"/></svg></button>
      </div>
      <div class="view3d flex-fill">
        <svg id="scene" width="100%" height="100%" viewBox="42 200 328 804" preserveAspectRatio="xMidYMax slice">
          <defs><linearGradient id="fade" x2="0" y2="1"><stop offset=".3" stop-color="#000"/><stop offset=".38" stop-color="#777"/><stop offset=".5" stop-color="#fff"/></linearGradient><mask id="fm" maskUnits="userSpaceOnUse" x="42" y="200" width="328" height="804"><path d="M42 200h328v804H42z" fill="url(#fade)"/></mask></defs>
          <g id="ground" stroke="#7f929b" fill="none" mask="url(#fm)"></g>
          <path d="M96 571l87-41 67 7-12 9 83 9-27 47-57-9-52-8-47-7z" fill="#a09b9c"/>
          <path d="M183 530l67 7 77 7-6 11M183 530L96 571l198 31 27-47" fill="none" stroke="#cfc2c2" stroke-width="1"/>
          <path d="M167 538l71 8M147 547l77 9 90 11M124 558l82 11 99 14M216 533l-92 25M250 537L138 578M216 533l-32 19-46 26M238 546l-32 23-21 16M278 550l-25 26-16 17M238 546l83 9" fill="none" stroke="#767373" stroke-width="1"/>
          <g id="pts" fill="#1010dc"></g>
          <path d="M67 557c0-8 19-8 19 0v4l6 6-6 6v4c0 8-19 8-19 0z" fill="#5a666b"/>
          <path d="M62 983v-16" stroke="#5c6" /><path d="M62 983l11-9" stroke="#c66"/><path d="M62 983l17 3" stroke="#66d"/><text x="235" y="992" font-size="11" fill="#d5dc5a" opacity=".6" font-family="Noto Sans CJK SC,sans-serif">Non-Commercial Edition</text>
        </svg>
        <button class="campill" style="right:74px">Persp<i class="tri"></i></button><button class="campill" style="right:6px">No cam<i class="tri"></i></button>
        <div class="hints"><b class="text-center">Select the geometry, then choose an operation to perform.</b><p>Hold A or Ctrl+A or Shift+A or Ctrl+Shift+A to select full (MMB) or<br>partial (LMB) loops.<br>Hold H or Ctrl+H or Shift+H or Ctrl+Shift+H to select by flood fill.</p></div>
      </div>
      <div class="rightbar d-flex flex-column align-items-center">
        <div class="endcap text-end pe-1">▶</div>
        <button class="tb on mk"><svg width="17" height="17"><use href="#pgrid"/></svg></button><button class="tb mk"><svg width="15" height="15"><use href="#green"/></svg></button><button class="tb"><svg width="15" height="15"><use href="#lock"/></svg></button><button class="tb"><svg width="15" height="16"><use href="#nobulb"/></svg></button><button class="tb mk"><svg width="16" height="16"><use href="#discs"/></svg></button><button class="tb on mk"><svg width="16" height="16"><use href="#bulb"/></svg></button><button class="tb mk"><svg width="16" height="16"><use href="#bulbp"/></svg></button><button class="tb mk"><svg width="16" height="16"><use href="#bulbf"/></svg></button><button class="tb on mk"><svg width="16" height="16"><use href="#chk"/></svg></button><button class="tb mkd"><svg width="15" height="15"><use href="#ey2"/></svg></button><button class="tb mk"><svg width="16" height="16"><use href="#ey3"/></svg></button>
        <div class="hr1 mb-1"></div>
        <button class="tb on"><svg width="15" height="15"><use href="#pt"/></svg></button><button class="tb"><svg width="14" height="14"><use href="#pt1"/></svg></button><button class="tb"><svg width="14" height="14"><use href="#pt2"/></svg></button><button class="tb"><svg width="16" height="16"><use href="#n12"/></svg></button><button class="tb"><svg width="15" height="15"><use href="#nrm"/></svg></button><button class="tb"><svg width="16" height="16"><use href="#p12"/></svg></button><button class="tb"><svg width="15" height="15"><use href="#bez"/></svg></button><button class="tb on"><svg width="15" height="15"><use href="#shade"/></svg></button><button class="tb on mk"><svg width="15" height="15"><use href="#uvc"/></svg></button><button class="tb"><svg width="15" height="15"><use href="#bdia"/></svg></button><button class="tb"><svg width="14" height="14"><use href="#grn"/></svg></button><button class="tb"><svg width="15" height="15"><use href="#yax"/></svg></button><button class="tb"><svg width="16" height="16"><use href="#eq"/></svg></button><button class="tb on mk"><svg width="16" height="16"><use href="#bg"/></svg></button>
        <div class="hr1 mt-1 mb-2"></div>
        <button class="tb on mk"><svg width="16" height="17"><use href="#pinm"/></svg></button>
        <div class="hr1 mt-auto mb-1"></div>
        <button class="tb"><svg width="16" height="16"><use href="#info"/></svg></button><button class="tb on"><svg width="16" height="16"><use href="#quad"/></svg></button><button class="tb mk"><svg width="15" height="15"><use href="#eye"/></svg></button>
      </div>
    </div>
  </section>
  <div class="vsash slim"><div class="dots"></div></div>

  <div class="d-flex flex-column flex-fill" style="min-width:0">
    <div class="d-flex flex-fill" style="min-height:0">
      <section class="d-flex flex-column flex-shrink-0" style="width:37.4%">
        <div class="hd d-flex align-items-center"><div class="ptab on d-flex align-items-center"><i>/obj/geo1</i><button aria-label="Close tab">×</button></div><span class="addtab ms-2">+</span><i class="maxi ms-auto me-2"></i><i class="tri me-1"></i></div>
        <div class="pathrow d-flex align-items-center"><svg width="15" height="15" color="#555"><use href="#larr"/></svg><svg class="fwd" width="15" height="15" color="#555" transform="rotate(180)"><use href="#larr"/></svg>
          <div class="pathbox d-flex align-items-center"><svg width="17" height="17"><use href="#clap"/></svg><span class="mx-1">obj</span><svg width="9" height="22" class="mx-1"><path d="M1 0l6 11-6 11" stroke="#1a1a1a" fill="none" stroke-width="1.500"/></svg><svg width="18" height="18"><use href="#geo"/></svg><span class="mx-1">geo1</span><div class="dd"><i class="tri"></i></div></div>
          <span class="num1">1</span><svg width="17" height="17"><use href="#tgt"/></svg></div>
        <div class="toolbar short d-flex align-items-center"><div class="grip h-100"></div><div class="netmenu d-flex"><a href="#">Add</a><a href="#">Edit</a><a href="#">Go</a><a href="#">View</a><a href="#">Tools</a><a href="#">Layout</a><a href="#">Labs</a><a href="#">Help</a></div>
          <div class="d-flex ms-auto"><button class="tb"><svg width="16" height="16"><use href="#wrench"/></svg></button><button class="tb"><svg width="15" height="15"><use href="#tree"/></svg></button><button class="tb me-2"><svg width="15" height="15"><use href="#list"/></svg></button><button class="tb"><svg width="14" height="14"><use href="#pal"/></svg></button><button class="tb me-2"><svg width="15" height="15"><use href="#gg"/></svg></button><button class="tb"><svg width="15" height="15"><use href="#nbox"/></svg></button><button class="tb"><svg width="15" height="15"><use href="#note"/></svg></button><button class="tb"><svg width="17" height="17"><use href="#img"/></svg></button><button class="tb me-2"><svg width="15" height="15"><use href="#crate"/></svg></button><button class="tb"><svg width="15" height="15"><use href="#mag"/></svg></button><button class="tb"><svg width="15" height="15"><use href="#eye"/></svg></button></div></div>
        <div class="net">
          <svg width="1300" height="1000" viewBox="403 193 1300 1000">
            <defs>
              <g id="nd"><rect width="90" height="28" rx="4" fill="#cecece" stroke="#a8a8a8"/><path d="M13 1l-3 26M26 1l-3 26M67 1l-3 26M80 1l-3 26" stroke="#8c8c8c"/></g>
            </defs>
            <g fill="#595959" stroke="#707070"><rect x="350" y="100" width="172" height="408" rx="8"/><rect x="350" y="562" width="172" height="116" rx="8"/><rect x="575" y="286" width="900" height="900" rx="8"/></g>
            <path d="M350 562h164q8 0 8 8v19H350zM575 313v-19q0-8 8-8h700v27z" fill="#727272"/>
            <path d="M403 342h235q28 0 35 16" fill="none" stroke="#587aa6" stroke-width="1.500"/>
            <rect x="592" y="326" width="301" height="488" rx="8" fill="#6e6e6e" stroke="#818181"/>
            <path d="M592 353v-19q0-8 8-8h285q8 0 8 8v19z" fill="#7d7d7d"/>
            <g fill="none" stroke="#7389a6" stroke-width="1"><path d="M640 342q28 0 33 20M673 405v22M655 600v30M691 600q3 20 21 24l308 26M712 624l230 70q28 6 37 30M673 672l-18 18M673 732v30"/><path d="M673 808q4 18 17 21l272 128q14 6 17 18M997 770v204" stroke="#6c87ab"/></g>
            <rect x="917" y="687" width="400" height="89" rx="8" fill="#6a6a6a" stroke="#808080"/><path d="M917 714v-19q0-8 8-8h200v27z" fill="#7b7b7b"/>
            <path d="M997 770v10" stroke="#6c87ab"/>
            <circle cx="673" cy="508" r="44" fill="#6f7a8b"/><circle cx="673" cy="508" r="28" fill="#857b90"/>
            <path d="M673 469v86" stroke="#857f8c"/>
            <path d="M602 302v-15M603 288v24M620 328v24M945 688v25" stroke="#808080"/>
            <path d="M584 299h15M601 340h15M926 699h15" stroke="#000" stroke-width="3"/><path d="M584 301.500h15M601 342.500h15M926 701.500h15" stroke="#bbb" stroke-width="1"/>
            <g fill="#000"><text x="607" y="305">2nd</text><text x="624" y="345">Valcony</text><text x="949" y="706">2nd_walls</text></g>
            <g fill="#b8b8b8"><circle cx="673" cy="363" r="4.500"/><circle cx="673" cy="405" r="4.500"/><circle cx="673" cy="427" r="4.500"/><circle cx="673" cy="469" r="4.500"/><circle cx="673" cy="488" r="4.500"/><circle cx="673" cy="530" r="4.500"/><circle cx="673" cy="555" r="4.500"/><circle cx="655" cy="597" r="4.500" fill="#ccc"/><circle cx="691" cy="597" r="4.500" fill="#ccc"/><circle cx="655" cy="630" r="4.500"/><circle cx="691" cy="630" r="4.500"/><circle cx="673" cy="672" r="4.500"/><circle cx="655" cy="690" r="4.500"/><circle cx="691" cy="690" r="4.500"/><circle cx="673" cy="732" r="4.500"/><circle cx="673" cy="762" r="4.500"/><circle cx="673" cy="804" r="4.500"/><circle cx="979" cy="724" r="4.500"/><circle cx="1016" cy="724" r="4.500"/><circle cx="997" cy="766" r="4.500"/></g>
            <use href="#nd" x="627" y="370"/><use href="#nd" x="627" y="433"/><use href="#nd" x="627" y="495"/><use href="#nd" x="627" y="562"/><use href="#nd" x="627" y="637"/><use href="#nd" x="627" y="698"/><use href="#nd" x="627" y="769"/><use href="#nd" x="952" y="731"/>
            <path d="M707 495h7q4 0 4 4v20q0 4-4 4h-10z" fill="#00adf2"/><rect x="627" y="495" width="91" height="28" rx="4" fill="none" stroke="#222" stroke-width="2"/><rect x="626" y="494" width="93" height="30" rx="5" fill="none" stroke="#f5cc12" stroke-width="2"/>
            <circle cx="673" cy="384" r="10" fill="none" stroke="#5c6d7c" stroke-width="3" stroke-dasharray="3 2"/><circle cx="673" cy="384" r="9.500" fill="#a3b8ca" stroke="#6d8192"/><circle cx="673" cy="384" r="5" fill="none" stroke="#c4d3df" stroke-width="2"/><circle cx="673" cy="384" r="2.500" fill="#4c6075"/>
            <g fill="none" stroke="#7d7f78"><circle cx="666" cy="439" r="2"/><circle cx="664" cy="447" r="2"/><circle cx="665" cy="454" r="2"/><path d="M668 450c0-14 14-16 14-3" stroke="#d98a3a" stroke-width="2"/><circle cx="675" cy="440" r="2"/><circle cx="673" cy="445" r="2"/><circle cx="679" cy="445" r="2"/><path d="M670 451v7M674 454h2M679 450h5M679 450v3l4 1v3l-4 1" stroke-width="1.500"/></g>
            <use href="#promo" x="662" y="498" width="22" height="22"/>
            <path d="M673 565l11 11-11 11-11-11z" fill="#d9bd22" stroke="#705f0c"/><path d="M672 583v-12M672 580l6-5" stroke="#111" stroke-width="2.500" fill="none"/><path d="M668 573l4-5 4 5zM675 573h6l-2 5z" fill="#111"/>
            <path d="M663 644l9-4 11 4-1 12-9 5-8-4z" fill="#b8b8be" stroke="#666"/><path d="M663 644l11 3 9-3M674 647l-1 14M663 644l10 17M674 647l8 9M664 655l19-11" fill="none" stroke="#c86a6a" stroke-width="1"/>
            <use href="#poly" x="662" y="700" width="23" height="23"/><use href="#poly" x="987" y="733" width="23" height="23"/>
            <path d="M670 774l3 9 8-5M673 784l-4 8" stroke="#345b88" stroke-width="5.500" fill="none" stroke-linecap="round"/><path d="M670 774l3 9 8-5M673 784l-4 8" stroke="#6d9ac9" stroke-width="3" fill="none" stroke-linecap="round"/><circle cx="673" cy="783" r="3" fill="#d02020"/>
            <path d="M732 594v-2q4-5 8 0v2" fill="none" stroke="#4f6a60" stroke-width="2"/><path d="M730 595h13v7h-13z" fill="#4f6a60" opacity=".8"/>
            <path d="M965 983q16-7 60-6" stroke="#b4b4b4" stroke-width="8" fill="none" stroke-linecap="round"/><path d="M953 1000q4-12 14-12l60-2v20z" fill="#cecece"/><path d="M965 1000l3-10M978 1000l2-10" stroke="#888"/><path d="M988 992h8l5 7h-8z" fill="#a8403c" stroke="#eee"/>
            <g fill="#c6c6c6"><text x="726" y="390">sort2</text><text x="726" y="453">grouprange2</text><text x="726" y="514">grouppromote2</text><text x="726" y="581">split1</text><text x="726" y="656">divide1</text><text x="726" y="717">polyextrude5</text><text x="726" y="788">polywire1</text></g>
            <g fill="#c6c6c6" text-anchor="end"><text x="463" y="243">grouppromote1</text><text x="441" y="394">polyextrude3</text><text x="441" y="484">polyextrude4</text><text x="493" y="641">transform2</text></g>
            <g fill="#6f9fdc"><text style="font-size:16px" x="726" y="483">random_points_valcony</text><text style="font-size:16px" x="726" y="545">splitme</text><g text-anchor="end"><text style="font-size:16px" x="482" y="216">two_points</text><text style="font-size:16px" x="432" y="274">prim</text><text style="font-size:16px" x="432" y="335">prim</text></g></g>
            <text style="font-size:19px" x="601" y="225" fill="#454545">Non-Commercial Edition</text><text style="font-size:23px;font-weight:700" x="895" y="231" fill="#535353">Geometry</text>
          </svg>
        </div>
      </section>
      <div class="vsash"><div class="dots"></div></div>
      <section class="d-flex flex-column flex-fill parm" style="min-width:0">
        <div class="hd d-flex align-items-center"><div class="ptab on d-flex align-items-center"><i>grouppromote2</i><button aria-label="Close tab">×</button></div><div class="ptab d-flex align-items-center">Geometry Spreadsheet<button aria-label="Close tab">×</button></div><span class="addtab ms-2">+</span><i class="maxi ms-auto me-2"></i><i class="tri me-1"></i></div>
        <div class="pathrow d-flex align-items-center"><svg width="15" height="15" color="#555"><use href="#larr"/></svg><svg class="fwd" width="15" height="15" color="#555" transform="rotate(180)"><use href="#larr"/></svg>
          <div class="pathbox d-flex align-items-center"><svg width="17" height="17"><use href="#clap"/></svg><span class="mx-1">obj</span><svg width="9" height="22" class="mx-1"><path d="M1 0l6 11-6 11" stroke="#1a1a1a" fill="none" stroke-width="1.500"/></svg><svg width="18" height="18"><use href="#geo"/></svg><span class="mx-1">geo1</span><div class="dd"><i class="tri"></i></div></div>
          <span class="num1">1</span><svg width="17" height="17"><use href="#tgt"/></svg></div>
        <div class="ophead d-flex align-items-center"><button class="tb mkd ms-1"><svg width="18" height="18"><use href="#promo"/></svg></button><label for="nname" class="fw-bold me-1">Group Promote</label><input id="nname" class="inp flex-fill" value="grouppromote2"><div class="d-flex"><button class="tb mkd"><svg width="15" height="15"><use href="#gear"/></svg></button><button class="tb mkd"><svg width="15" height="15"><use href="#hh"/></svg></button><button class="tb"><svg width="15" height="15"><use href="#mag"/></svg></button><button class="tb"><svg width="15" height="15"><use href="#info"/></svg></button><button class="tb me-1"><svg width="15" height="15"><use href="#help"/></svg></button></div></div>
        <form>
          <div class="prow first"><label for="np" style="width:129px">Number of Promotions</label><input id="np" class="inp" value="1" style="width:281px"><button type="button" class="sq">+</button><button type="button" class="sq">−</button><button type="button" class="btnish clr ms-1">Clear</button></div>
          <div class="prow multi"><button type="button" class="sq mini" aria-label="Remove">×</button><button type="button" class="sq mini ins" aria-label="Insert">⇞</button><input type="checkbox" class="cbx ms-4" checked aria-label="Enable promotion"></div>
          <div class="prow field conv"><label class="plab" for="cf">Convert From</label><select id="cf" class="combo btnish pick"><option>Auto</option></select><label for="ct" class="ms-1 pe-3">To</label><select id="ct" class="combo btnish fw-bold pick"><option>Primitives</option></select></div>
          <div class="prow field"><label class="plab" for="gn">Group Name</label><input id="gn" class="inp flex-fill fw-bold text-white" value="random_points_valcony"><button type="button" class="sq mx-1" aria-label="Menu"><i class="tri d-block mx-auto"></i></button><span class="pe-4"></span></div>
          <div class="prow field"><label class="plab" for="nn">New Name</label><input id="nn" class="inp flex-fill fw-bold text-white" value="splitme"><button type="button" class="sq mx-1" aria-label="Menu"><i class="tri d-block mx-auto"></i></button><span class="pe-4"></span></div>
          <div class="prow ck"><span class="plab"></span><input class="cbx" type="checkbox" id="c1"><label for="c1">Keep Original Group</label></div>
          <div class="prow ck"><span class="plab"></span><input class="cbx" type="checkbox" id="c2"><label for="c2">Include Only Elements on the Boundary</label></div>
          <div class="prow ck"><span class="plab"></span><input class="cbx" type="checkbox" id="c3" checked disabled><label for="c3" class="off">Include Unshared Edges</label></div>
          <div class="prow field"><span class="plab d-flex justify-content-end align-items-center"><input class="cbx me-1" type="checkbox" id="c8" disabled aria-label="Use connectivity attribute"><label for="ca" class="off">Connectivity Attrib…</label></span><input id="ca" class="inp flex-fill" value="uv" disabled><button type="button" class="sq mx-1 opacity-50" disabled aria-label="Menu"><i class="tri d-block mx-auto"></i></button><span class="pe-4"></span></div>
          <div class="prow ck"><span class="plab"></span><input class="cbx" type="checkbox" id="c4" disabled><label for="c4" class="off">Include All Primitives Sharing Attribute Boundary Points</label></div>
          <div class="prow ck"><span class="plab"></span><input class="cbx" type="checkbox" id="c5"><label for="c5">Include Only Elements Entirely Contained in Original Group</label></div>
          <div class="prow ck"><span class="plab"></span><input class="cbx" type="checkbox" id="c6" disabled><label for="c6" class="off">Remove Degenerate Bridges</label></div>
          <div class="prow ck"><span class="plab"></span><input class="cbx" type="checkbox" id="c7"><label for="c7">Output as Integer Attribute</label></div>
        </form>
      </section>
    </div>
    <div class="hsash d-grid justify-content-center"><div class="dots"></div></div>
  </div>
</main>

<section class="tline d-flex">
  <div class="grip down"></div>
  <div class="transport d-flex flex-column">
    <div class="d-flex"><button class="pb" aria-label="First"><svg class="ic"><use href="#first"/></svg></button><button class="pb" aria-label="Reverse"><svg width="16" height="16"><use href="#prev"/></svg></button><button class="pb on" aria-label="Stop"><svg width="14" height="14"><path d="M0 0h14v14H0z" fill="#e6e6e0"/></svg></button><button class="pb" aria-label="Play"><svg width="16" height="16" transform="rotate(180)"><use href="#prev"/></svg></button><button class="pb" aria-label="Last"><svg class="ic" transform="rotate(180)"><use href="#first"/></svg></button><input class="inp frm mx-1" value="68" aria-label="Frame"><button class="pb sm" aria-label="Step back"><svg width="9" height="11" viewBox="0 0 9 11"><path d="M5 0v11L0 5.500zM6 0h2v11H6z" fill="#ddd"/></svg></button><button class="pb sm" aria-label="Step forward"><svg width="9" height="11" viewBox="0 0 9 11"><path d="M4 0v11l5-5.500zM1 0h2v11H1z" fill="#ddd"/></svg></button></div>
    <div class="d-flex"><button class="pb low" aria-label="Scope"><svg width="18" height="18"><use href="#sel2"/></svg></button><button class="pb low" aria-label="Audio"><svg width="18" height="18"><use href="#spk"/></svg></button><button class="pb low mkd position-relative" aria-label="Loop"><svg width="18" height="18"><use href="#undo"/></svg></button><button class="pb low me-1" aria-label="Realtime"><svg width="18" height="18"><use href="#clock"/></svg></button><button class="pb low jump" aria-label="Previous key"><svg width="10" height="10"><path d="M10 0v10L3 5z" fill="#555"/><path d="M0 0h2v10H0z" fill="#3f5a33"/></svg></button><button class="pb low jump" aria-label="Next key"><svg width="10" height="10"><path d="M0 0v10l7-5z" fill="#555"/><path d="M8 0h2v10H8z" fill="#3f5a33"/></svg></button></div>
  </div>
  <div class="playbar flex-fill position-relative">
    <svg id="ruler" class="ruler" width="100%" height="43" overflow="visible"></svg>
    <div class="now">68</div>
    <div class="d-flex align-items-center"><input class="inp fnum dim" value="1" aria-label="Global start"><input class="inp fnum ms-1" value="1" aria-label="Range start"><svg width="6" height="14"><path d="M0 0v14l6-7z" fill="#aaa"/></svg><div class="slit"></div><svg width="6" height="14"><path d="M6 0v14L0 7z" fill="#aaa"/></svg><input class="inp fnum ms-1" value="200" aria-label="Range end"><input class="inp fnum dim ms-1" value="200" aria-label="Global end"></div>
  </div>
  <div class="d-flex align-items-center ms-1"><button class="keyc" aria-label="Set key"><svg width="18" height="18"><use href="#keyi"/></svg></button><button class="sq me-2" aria-label="Key options"><i class="tri d-block mx-auto" style="border-top-color:#aaa;border-width:6px 4px 0"></i></button></div>
  <div class="d-flex flex-column pt-2 gap-1"><button class="pb chan mk position-relative" aria-label="Channels"><svg width="16" height="17"><use href="#kref"/></svg></button><button class="pb chan" aria-label="Curves"><svg width="15" height="15"><use href="#wave"/></svg></button></div>
  <div class="chans d-flex flex-column ms-1 me-1"><button class="btnish clr w-100 position-relative" style="height:24px">0 keys, 0/0 channels<svg width="8" height="8" class="position-absolute end-0 top-50 translate-middle-y me-1"><path d="M4 0l4 8H0z" fill="#999"/></svg></button><select class="combo btnish pick w-100" aria-label="Key scope"><option>Key All Channels</option></select></div>
</section>
<footer class="status d-flex justify-content-end">
  <div class="d-flex align-items-center gap-2 px-1" style="background:#3a3a3a;width:55px"><svg width="17" height="17"><use href="#brain"/></svg><svg width="16" height="16" class="ms-1"><use href="#ref"/></svg></div><select class="combo" style="width:117px;padding-left:15px" aria-label="Update mode"><option>Auto Update</option></select>
</footer>

<script>
// Ground plane: two families of lines, each meeting at its own vanishing point.
let g = '';
for (let k = 0; k < 30; k++) {
  const x = 67 - 440 * k;
  g += `<path d="M389 434L${x} 1004" stroke-width="${k % 5 === 1 ? 2 : 1}"/>`;
  const s = 1 / (2.81 + 1.75 * k), w = k % 5 === 3 ? 2 : 1;
  g += `<path d="M-820 430L400 ${(430 + 1220 * s).toFixed(1)}" stroke-width="${w}"/>`;
}
document.getElementById('ground').innerHTML = g;
const pts = [[183,530],[216,533],[250,537],[167,538],[201,542],[238,546],[278,550],[321,555],[147,547],[184,552],[224,556],[267,562],[314,567],[124,558],[163,564],[206,569],[253,576],[305,583],[96,571],[138,578],[185,585],[237,593],[294,602]];
document.getElementById('pts').innerHTML = pts.map(p => `<circle cx="${p[0]}" cy="${p[1]}" r="2"/>`).join('');
// Playbar ruler, frames 1 to 200.
let r = '<line x1="0" x2="100%" y1="22.5" y2="22.5" stroke="#aaa"/>';
for (let f = 1; f <= 200; f++) {
  const x = ((f - 1) / 199.7 * 100).toFixed(3) + '%', big = f % 24 === 0;
  r += `<line x1="${x}" x2="${x}" y1="${big ? 15 : 18}" y2="${big ? 30 : 27}" stroke="${big ? '#aaa' : '#808080'}"/>`;
  if (big || f === 1) r += `<text x="${x}" dx="1" y="9">${f}</text>`;
}
document.getElementById('ruler').innerHTML = r;
</script>
<script src="https://cdn.jsdelivr.net/npm/bootstrap@5.3.0/dist/js/bootstrap.bundle.min.js"></script>
</body>
</html>
